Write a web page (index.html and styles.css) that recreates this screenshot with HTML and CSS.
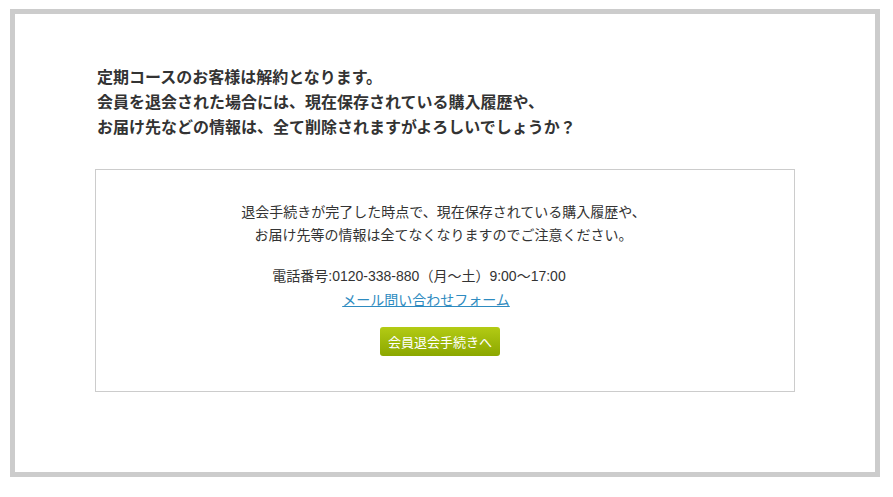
FILE: index.html
```html
<!DOCTYPE html>
<html lang="ja">
<head>
  <meta charset="UTF-8">
  <meta name="viewport" content="width=device-width,initial-scale=1.0">
  <title>退会手続き</title>
  <link rel="stylesheet" href="styles.css">
</head>
<body>

  <div class="frame">
    <div class="withdraw">
      <h1 class="lead">
        定期コースのお客様は解約となります。<br>
        会員を退会された場合には、現在保存されている購入履歴や、<br>
        お届け先などの情報は、全て削除されますがよろしいでしょうか？
      </h1>

      <!-- 注意事項 -->
      <div class="notice">
        <p class="caution">
          退会手続きが完了した時点で、現在保存されている購入履歴や、<br>
          お届け先等の情報は全てなくなりますのでご注意ください。
        </p>
        <p class="contact">
          <span class="tel">電話番号:0120-338-880（月～土）9:00～17:00</span><br>
          <a href="#">メール問い合わせフォーム</a>
        </p>
        <button class="btn-next">会員退会手続きへ</button>
      </div>
    </div>
  </div>

</body>
</html>
```

FILE: styles.css
```css
body {
  margin: 0;
  padding: 9px 13px 20px 10px;
  background-color: #ffffff;
  color: #333333;
  font-family: "Noto Sans CJK JP", "Noto Sans", sans-serif;
}

.frame {
  width: 860px;
  height: 458px;
  border: 5px solid #cccccc;
  background-color: #ffffff;
}

.withdraw {
  padding: 50px 0 0 80px;
}

.lead {
  margin: 0 0 30px 2px;
  font-size: 16px;
  font-weight: 700;
  line-height: 25px;
  color: #333333;
}

.notice {
  width: 688px;
  padding: 30px 10px 35px 0;
  border: 1px solid #cccccc;
  text-align: center;
  font-size: 14px;
  line-height: 23px;
}

.notice p {
  margin: 0 0 19px;
}

.notice .caution {
  padding-left: 7px;
}

.notice .contact {
  margin-bottom: 15px;
  padding-right: 28px;
  font-family: "Liberation Sans", "Noto Sans CJK JP", sans-serif;
}

.notice .tel {
  margin-right: 14px;
}

.notice a {
  color: #2e8bc0;
  text-decoration: underline;
  font-family: "Noto Sans CJK JP", sans-serif;
}

.btn-next {
  width: 120px;
  height: 29px;
  padding: 0;
  border: none;
  border-radius: 3px;
  background: linear-gradient(to bottom, #b3cb14, #8ba700);
  color: #ffffff;
  font-family: inherit;
  font-size: 13px;
  cursor: pointer;
}

.btn-next:hover {
  background: #8ba700;
}
```
